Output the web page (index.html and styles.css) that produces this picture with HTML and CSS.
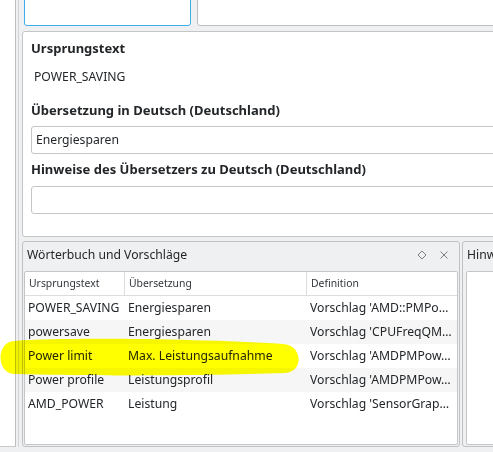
FILE: index.html
```html
<!DOCTYPE html>
<html lang="de">
<head>
<meta charset="utf-8">
<title>Übersetzung</title>
<link rel="stylesheet" href="styles.css">
</head>
<body>
<div class="app">
  <div class="sidebar-frame"><div class="sidebar"></div></div>
  <div class="main">
    <div class="top-row">
      <div class="field field-focus"></div>
      <div class="field field-wide"></div>
    </div>
    <div class="editor">
      <div class="label">Ursprungstext</div>
      <div class="source">POWER_SAVING</div>
      <div class="label label-translation">Übersetzung in Deutsch (Deutschland)</div>
      <div class="input">Energiesparen</div>
      <div class="label label-notes">Hinweise des Übersetzers zu Deutsch (Deutschland)</div>
      <div class="input input-notes"></div>
    </div>
    <div class="docks">
      <section class="dock dock-glossary">
        <header class="dock-title">
          <span class="dock-name">Wörterbuch und Vorschläge</span>
          <svg class="icon icon-float" width="10" height="10" viewBox="0 0 10 10"><path d="M5 1 L9 5 L5 9 L1 5 Z" fill="none" stroke="#7d7e80" stroke-width="1"/></svg>
          <svg class="icon icon-close" width="10" height="10" viewBox="0 0 10 10"><path d="M1.5 1.5 L8.5 8.5 M8.5 1.5 L1.5 8.5" fill="none" stroke="#7d7e80" stroke-width="1"/></svg>
        </header>
        <div class="table">
          <div class="row thead">
            <div class="th">Ursprungstext</div>
            <div class="th">Übersetzung</div>
            <div class="th th-last">Definition</div>
          </div>
          <div class="row">
            <div class="td">POWER_SAVING</div>
            <div class="td">Energiesparen</div>
            <div class="td">Vorschlag 'AMD::PMPo…</div>
          </div>
          <div class="row alt">
            <div class="td">powersave</div>
            <div class="td">Energiesparen</div>
            <div class="td">Vorschlag 'CPUFreqQM…</div>
          </div>
          <div class="row">
            <div class="td">Power limit</div>
            <div class="td">Max. Leistungsaufnahme</div>
            <div class="td">Vorschlag 'AMDPMPow…</div>
          </div>
          <div class="row alt">
            <div class="td">Power profile</div>
            <div class="td">Leistungsprofil</div>
            <div class="td">Vorschlag 'AMDPMPow…</div>
          </div>
          <div class="row">
            <div class="td">AMD_POWER</div>
            <div class="td">Leistung</div>
            <div class="td">Vorschlag 'SensorGrap…</div>
          </div>
        </div>
      </section>
      <section class="dock dock-hints">
        <header class="dock-title">
          <span class="dock-name">Hinweise</span>
        </header>
        <div class="hints-box"></div>
      </section>
    </div>
  </div>
  <svg class="highlight" width="305" height="42" viewBox="0 0 305 42"><path d="M14 5 C70 1, 200 3, 283 8 C303 9, 304 36, 285 37 C200 40, 70 40, 14 38 C-4 37, -4 6, 14 5 Z" fill="#ffff00"/></svg>
</div>
</body>
</html>
```

FILE: styles.css
```css
html, body {
  margin: 0;
  padding: 0;
}

body {
  width: 493px;
  height: 452px;
  overflow: hidden;
  background: #eff0f1;
  font-family: "Noto Sans", "DejaVu Sans", sans-serif;
  font-size: 12.2px;
  color: #232629;
}

.app {
  position: relative;
  display: flex;
  height: 447px;
}

.sidebar-frame {
  flex: none;
  display: flex;
  width: 16px;
  padding-right: 2px;
  border-right: 1px solid #d3d4d5;
}

.sidebar {
  width: 15px;
  background: #ffffff;
  border-right: 1px solid #bcbebf;
  border-bottom: 1px solid #c8c9ca;
}

.main {
  flex: none;
  width: 490px;
  margin-left: 3px;
  display: flex;
  flex-direction: column;
}

.top-row {
  flex: none;
  display: flex;
  gap: 6px;
  height: 32px;
  margin-top: -6px;
}

.field {
  box-sizing: border-box;
  background: #ffffff;
  border: 1px solid #bcbebf;
  border-radius: 3px;
}

.field-focus {
  width: 167px;
  margin-left: 2px;
  border-color: #3daee9;
}

.field-wide {
  flex: 1;
}

.editor {
  flex: none;
  box-sizing: border-box;
  height: 206px;
  margin-top: 5px;
  padding: 7px 8px 0;
  background: #ffffff;
  border: 1px solid #c4c5c6;
  border-radius: 3px;
}

.label {
  font-size: 13px;
  font-weight: 700;
  line-height: 18px;
  white-space: nowrap;
}

.source {
  margin-top: 11px;
  padding-left: 3px;
  line-height: 18px;
}

.label-translation {
  margin-top: 15px;
}

.input {
  box-sizing: border-box;
  height: 28px;
  margin-top: 7px;
  padding: 0 4px;
  line-height: 26px;
  border: 1px solid #c4c5c6;
  border-radius: 3px;
  background: #ffffff;
}

.label-notes {
  margin-top: 6px;
}

.input-notes {
  margin-top: 8px;
}

.docks {
  flex: 1;
  min-height: 0;
  display: flex;
  gap: 2px;
  margin-top: 4px;
}

.dock {
  box-sizing: border-box;
  display: flex;
  flex-direction: column;
  padding: 0 1px 1px;
  border: 1px solid #c0c1c2;
  border-radius: 3px;
}

.dock-glossary {
  flex: none;
  width: 438px;
}

.dock-hints {
  flex: 1;
  min-width: 0;
}

.dock-title {
  flex: none;
  display: flex;
  align-items: center;
  height: 25px;
  margin-bottom: 4px;
  padding-left: 3px;
  line-height: 18px;
  overflow: hidden;
}

.dock-name {
  flex: 1;
  white-space: nowrap;
}

.icon {
  flex: none;
  display: block;
}

.icon-close {
  margin-left: 12px;
  margin-right: 9px;
}

.table {
  flex: 1;
  background: #ffffff;
  border: 1px solid #c4c5c6;
  border-radius: 2px;
  overflow: hidden;
}

.row {
  display: grid;
  grid-template-columns: 100px 182px 1fr;
}

.thead {
  border-bottom: 1px solid #dcdddd;
}

.th {
  box-sizing: border-box;
  padding: 0 4px;
  font-size: 10.4px;
  line-height: 23px;
  color: #31363b;
  border-right: 1px solid #dcdddd;
  white-space: nowrap;
  overflow: hidden;
}

.th-last {
  border-right: none;
}

.td {
  box-sizing: border-box;
  padding: 0 3px;
  line-height: 24px;
  white-space: nowrap;
  overflow: hidden;
}

.alt {
  background: #f6f6f6;
}

.hints-box {
  flex: 1;
  margin-left: 2px;
  background: #ffffff;
  border: 1px solid #c4c5c6;
  border-radius: 2px;
}

.highlight {
  position: absolute;
  left: 0;
  top: 336px;
  mix-blend-mode: multiply;
  pointer-events: none;
}
```
